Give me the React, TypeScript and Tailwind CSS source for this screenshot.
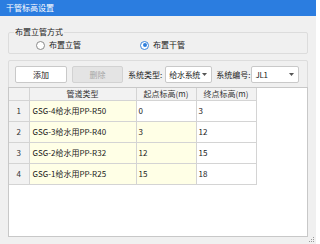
import React from 'react'

interface PipeRow {
    id: number
    type: string
    start: string
    end: string
}

const rows: PipeRow[] = [
    { id: 1, type: 'GSG-4给水用PP-R50', start: '0', end: '3' },
    { id: 2, type: 'GSG-3给水用PP-R40', start: '3', end: '12' },
    { id: 3, type: 'GSG-2给水用PP-R32', start: '12', end: '15' },
    { id: 4, type: 'GSG-1给水用PP-R25', start: '15', end: '18' },
]

const Radio: React.FC<{ checked?: boolean; label: string; className?: string }> = ({ checked, label, className }) => (
    <label className={`flex items-center gap-[4px] ${className ?? ''}`}>
        <span
            className={`w-[9px] h-[9px] rounded-full border bg-white flex items-center justify-center ${
                checked ? 'border-[#3b86dc]' : 'border-[#8a8a8a]'
            }`}
        >
            {checked && <span className="w-[4px] h-[4px] rounded-full bg-[#2f7fdc]" />}
        </span>
        <span className="text-[#1a1a1a]">{label}</span>
    </label>
)

const Select: React.FC<{ value: string; className?: string }> = ({ value, className }) => (
    <div
        className={`h-[17px] bg-white border border-[#c9c9c9] rounded-[2px] flex items-center justify-between pl-[3px] pr-[4px] whitespace-nowrap ${className ?? ''}`}
    >
        <span className="text-[#1a1a1a] tracking-[-0.3px]">{value}</span>
        <svg width="5" height="3" viewBox="0 0 5 3" className="shrink-0">
            <path d="M0 0 H5 L2.5 3 Z" fill="#555" />
        </svg>
    </div>
)

export default function App() {
    return (
        <div
            className="w-[316px] h-[244px] bg-[#f0f0f0] flex flex-col text-[8px] leading-[10px] overflow-hidden relative whitespace-nowrap"
            style={{ fontFamily: '"Noto Sans CJK SC", "Noto Sans", sans-serif' }}
        >
            <div className="h-[16px] shrink-0 bg-[#2b7de0] text-white flex items-center pl-[6px]">干管标高设置</div>

            <div className="flex-1 flex flex-col px-[8px] pb-[7px]">
                <fieldset className="mt-[11px] border border-[#dcdcdc] rounded-[2px] px-0 pb-0">
                    <legend className="ml-[5px] px-[1px] h-[10px] leading-[10px] text-[#1a1a1a]">布置立管方式</legend>
                    <div className="h-[16px] flex items-center pl-[27px]">
                        <Radio label="布置立管" className="w-[104px]" />
                        <Radio label="布置干管" checked />
                    </div>
                </fieldset>

                <div className="mt-[6px] flex-1 flex flex-col border border-[#dcdcdc] rounded-[2px] bg-[#f0f0f0]">
                    <div className="h-[17px] mt-[5px] mb-[4px] flex items-center pl-[6px]">
                        <button className="w-[52px] h-[17px] bg-white border border-[#c9c9c9] rounded-[2px] text-[#1a1a1a]">
                            添加
                        </button>
                        <button className="ml-[5px] w-[51px] h-[17px] bg-[#e4e4e4] border border-[#d2d2d2] rounded-[2px] text-[#a6a6a6]">
                            删除
                        </button>
                        <span className="ml-[5px] text-[#1a1a1a]">系统类型:</span>
                        <Select value="给水系统" className="ml-[3px] w-[47px]" />
                        <span className="ml-[4px] text-[#1a1a1a]">系统编号:</span>
                        <Select value="JL1" className="ml-[1px] w-[48px]" />
                    </div>

                    <div className="flex-1 bg-white border-t border-[#c8c8c8] -mx-px -mb-px border-x border-b">
                        <table className="border-collapse table-fixed">
                            <colgroup>
                                <col className="w-[20px]" />
                                <col className="w-[107px]" />
                                <col className="w-[60px]" />
                                <col className="w-[60px]" />
                            </colgroup>
                            <thead>
                                <tr className="h-[12px] bg-[#f2f2f2] text-[#333]">
                                    <th className="border-r border-b border-[#d4d4d4] font-normal" />
                                    <th className="border-r border-b border-[#d4d4d4] font-normal text-center">管道类型</th>
                                    <th className="border-r border-b border-[#d4d4d4] font-normal text-center">起点标高(m)</th>
                                    <th className="border-r border-b border-[#d4d4d4] font-normal text-center">终点标高(m)</th>
                                </tr>
                            </thead>
                            <tbody>
                                {rows.map((row) => (
                                    <tr key={row.id} className="h-[21px] text-[#1a1a1a]">
                                        <td className="border-r border-b border-[#d4d4d4] bg-[#f2f2f2] text-center text-[#333]">
                                            {row.id}
                                        </td>
                                        <td className="border-r border-b border-[#d4d4d4] bg-[#ffffe6] pl-[3px]">{row.type}</td>
                                        <td
                                            className={`border-r border-b border-[#d4d4d4] pl-[2px] ${
                                                row.id === 1 ? 'bg-white' : 'bg-[#ffffe6]'
                                            }`}
                                        >
                                            {row.start}
                                        </td>
                                        <td className="border-r border-b border-[#d4d4d4] bg-white pl-[2px]">{row.end}</td>
                                    </tr>
                                ))}
                            </tbody>
                        </table>
                    </div>
                </div>
            </div>

            <svg className="absolute right-[2px] bottom-[2px]" width="5" height="5" viewBox="0 0 5 5">
                <rect x="4" y="0" width="1" height="1" fill="#9a9a9a" />
                <rect x="2" y="2" width="1" height="1" fill="#9a9a9a" />
                <rect x="4" y="2" width="1" height="1" fill="#9a9a9a" />
                <rect x="0" y="4" width="1" height="1" fill="#9a9a9a" />
                <rect x="2" y="4" width="1" height="1" fill="#9a9a9a" />
                <rect x="4" y="4" width="1" height="1" fill="#9a9a9a" />
            </svg>
        </div>
    )
}
